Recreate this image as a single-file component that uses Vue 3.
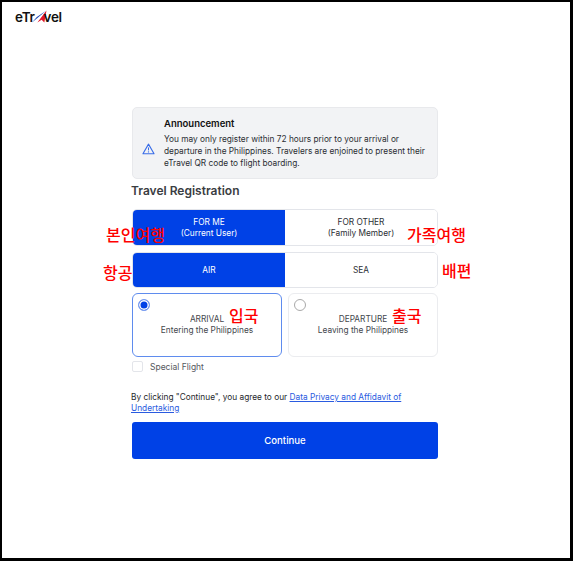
<template>
  <div class="frame">
    <div class="logo">
      <span>eTr</span>
      <svg class="logo-a" viewBox="0 0 14 12" width="15" height="13">
        <path d="M0 11.5 L13.5 0.5 L4.5 6.5 Z" fill="#1a45b5" />
        <path d="M5 11.5 L13.5 0.5 L11.5 11.5 L9 9 Z" fill="#e0162b" />
      </svg>
      <span>vel</span>
    </div>

    <div class="form">
      <div class="notice">
        <svg class="notice-icon" viewBox="0 0 14 13" width="13" height="12">
          <path d="M7 1.2 L13 11.6 L1 11.6 Z" fill="none" stroke="#3a6ee8" stroke-width="1.2" stroke-linejoin="round" />
          <path d="M7 4.8 V8" stroke="#3a6ee8" stroke-width="1.1" />
          <circle cx="7" cy="9.7" r="0.7" fill="#3a6ee8" />
        </svg>
        <div>
          <h4>Announcement</h4>
          <p>You may only register within 72 hours prior to your arrival or departure in the Philippines. Travelers are enjoined to present their eTravel QR code to flight boarding.</p>
        </div>
      </div>

      <h3 class="title">Travel Registration</h3>

      <div class="toggle who">
        <button class="on">FOR ME<br />(Current User)</button>
        <button>FOR OTHER<br />(Family Member)</button>
        <span class="note" style="left: -27px; top: 16px">본인여행</span>
        <span class="note" style="left: 274px; top: 16px">가족여행</span>
      </div>

      <div class="toggle how">
        <button class="on">AIR</button>
        <button>SEA</button>
        <span class="note" style="left: -30px; top: 11px">항공</span>
        <span class="note" style="left: 309px; top: 9px">배편</span>
      </div>

      <div class="cards">
        <div class="card active">
          <span class="radio checked"></span>
          <div class="card-text">ARRIVAL<br />Entering the Philippines</div>
          <span class="note" style="left: 96px; top: 13px">입국</span>
        </div>
        <div class="card">
          <span class="radio"></span>
          <div class="card-text">DEPARTURE<br />Leaving the Philippines</div>
          <span class="note" style="left: 103px; top: 13px">출국</span>
        </div>
      </div>

      <label class="special">
        <span class="check"></span>
        Special Flight
      </label>

      <p class="agree">By clicking "Continue", you agree to our <a href="#">Data Privacy and Affidavit of Undertaking</a></p>

      <button class="continue">Continue</button>
    </div>
  </div>
</template>

<script setup>
</script>

<style scoped>
.frame {
  box-sizing: border-box;
  width: 573px;
  height: 561px;
  border: solid #000;
  border-width: 2px 3px 3px 2px;
  background: #fff;
  position: relative;
  font-family: Inter, "Liberation Sans", "Noto Sans CJK KR", sans-serif;
  color: #222;
  padding: 8px 0 0 13px;
}

.logo {
  display: flex;
  align-items: flex-end;
  height: 14px;
  font-size: 13.5px;
  line-height: 14px;
  font-weight: 600;
  letter-spacing: -0.3px;
  color: #111;
}

.logo-a {
  margin: 0 -3px 1px -3px;
}

.form {
  width: 306px;
  margin: 83px 0 0 117px;
}

.notice {
  box-sizing: border-box;
  height: 72px;
  background: #f2f3f5;
  border: 1px solid #e8e9ec;
  border-radius: 5px;
  display: flex;
  align-items: center;
  gap: 9px;
  padding: 0 7px 0 9px;
}

.notice-icon {
  flex: none;
  margin-top: 12px;
}

.notice h4 {
  margin: 0 0 3px;
  font-size: 9.5px;
  line-height: 12px;
  font-weight: 600;
  color: #111;
}

.notice p {
  margin: 0;
  font-size: 8.3px;
  line-height: 12px;
  color: #2b2e33;
}

.title {
  margin: 4px 0 11px -1px;
  font-size: 12px;
  line-height: 15px;
  font-weight: 600;
  color: #3a3d42;
}

.toggle {
  box-sizing: border-box;
  position: relative;
  display: flex;
  border: 1px solid #e3e5ea;
  border-radius: 5px;
}

.who {
  height: 37px;
  margin-bottom: 6px;
}

.how {
  height: 36px;
  margin-bottom: 5px;
}

.toggle button {
  flex: 1;
  border: 0;
  background: #fff;
  color: #2b2e33;
  font: inherit;
  font-size: 8.3px;
  line-height: 10.5px;
  padding: 0;
  border-radius: 0 4px 4px 0;
}

.toggle button.on {
  background: #0041e6;
  color: #fff;
  border-radius: 4px 0 0 4px;
}

.note {
  position: absolute;
  color: #f00;
  font-size: 16px;
  font-weight: 500;
  line-height: 16px;
  white-space: nowrap;
  font-family: "Noto Sans CJK KR", sans-serif;
}

.cards {
  display: flex;
  gap: 6px;
}

.card {
  box-sizing: border-box;
  position: relative;
  flex: 1;
  height: 64px;
  border: 1px solid #ebecef;
  border-radius: 6px;
  display: flex;
  flex-direction: column;
}

.card.active {
  border-color: #5f8cee;
}

.card-text {
  font-size: 8.3px;
  line-height: 10.5px;
  text-align: center;
  color: #44474d;
  margin-top: 20px;
}

.radio {
  box-sizing: border-box;
  position: absolute;
  left: 5px;
  top: 5px;
  width: 12px;
  height: 12px;
  border: 1px solid #a9a9a9;
  border-radius: 50%;
  background: #fff;
}

.radio.checked {
  border-color: #7da0f0;
  background: #0041e6;
  box-shadow: inset 0 0 0 1.5px #fff;
}

.special {
  display: flex;
  align-items: center;
  gap: 7px;
  margin-top: 3px;
  height: 13px;
  font-size: 8.5px;
  color: #55585e;
}

.check {
  box-sizing: border-box;
  width: 11px;
  height: 11px;
  border: 1px solid #e3e5ea;
  border-radius: 2px;
}

.agree {
  margin: 19px 0 0 -1px;
  font-size: 8.3px;
  line-height: 10.5px;
  color: #26282c;
}

.agree a {
  color: #2a5be0;
}

.continue {
  display: block;
  box-sizing: border-box;
  width: 100%;
  height: 37px;
  margin-top: 9px;
  border: 0;
  border-radius: 3px;
  background: #0041e6;
  color: #fff;
  font: inherit;
  font-size: 9.6px;
  font-weight: 500;
}
</style>
